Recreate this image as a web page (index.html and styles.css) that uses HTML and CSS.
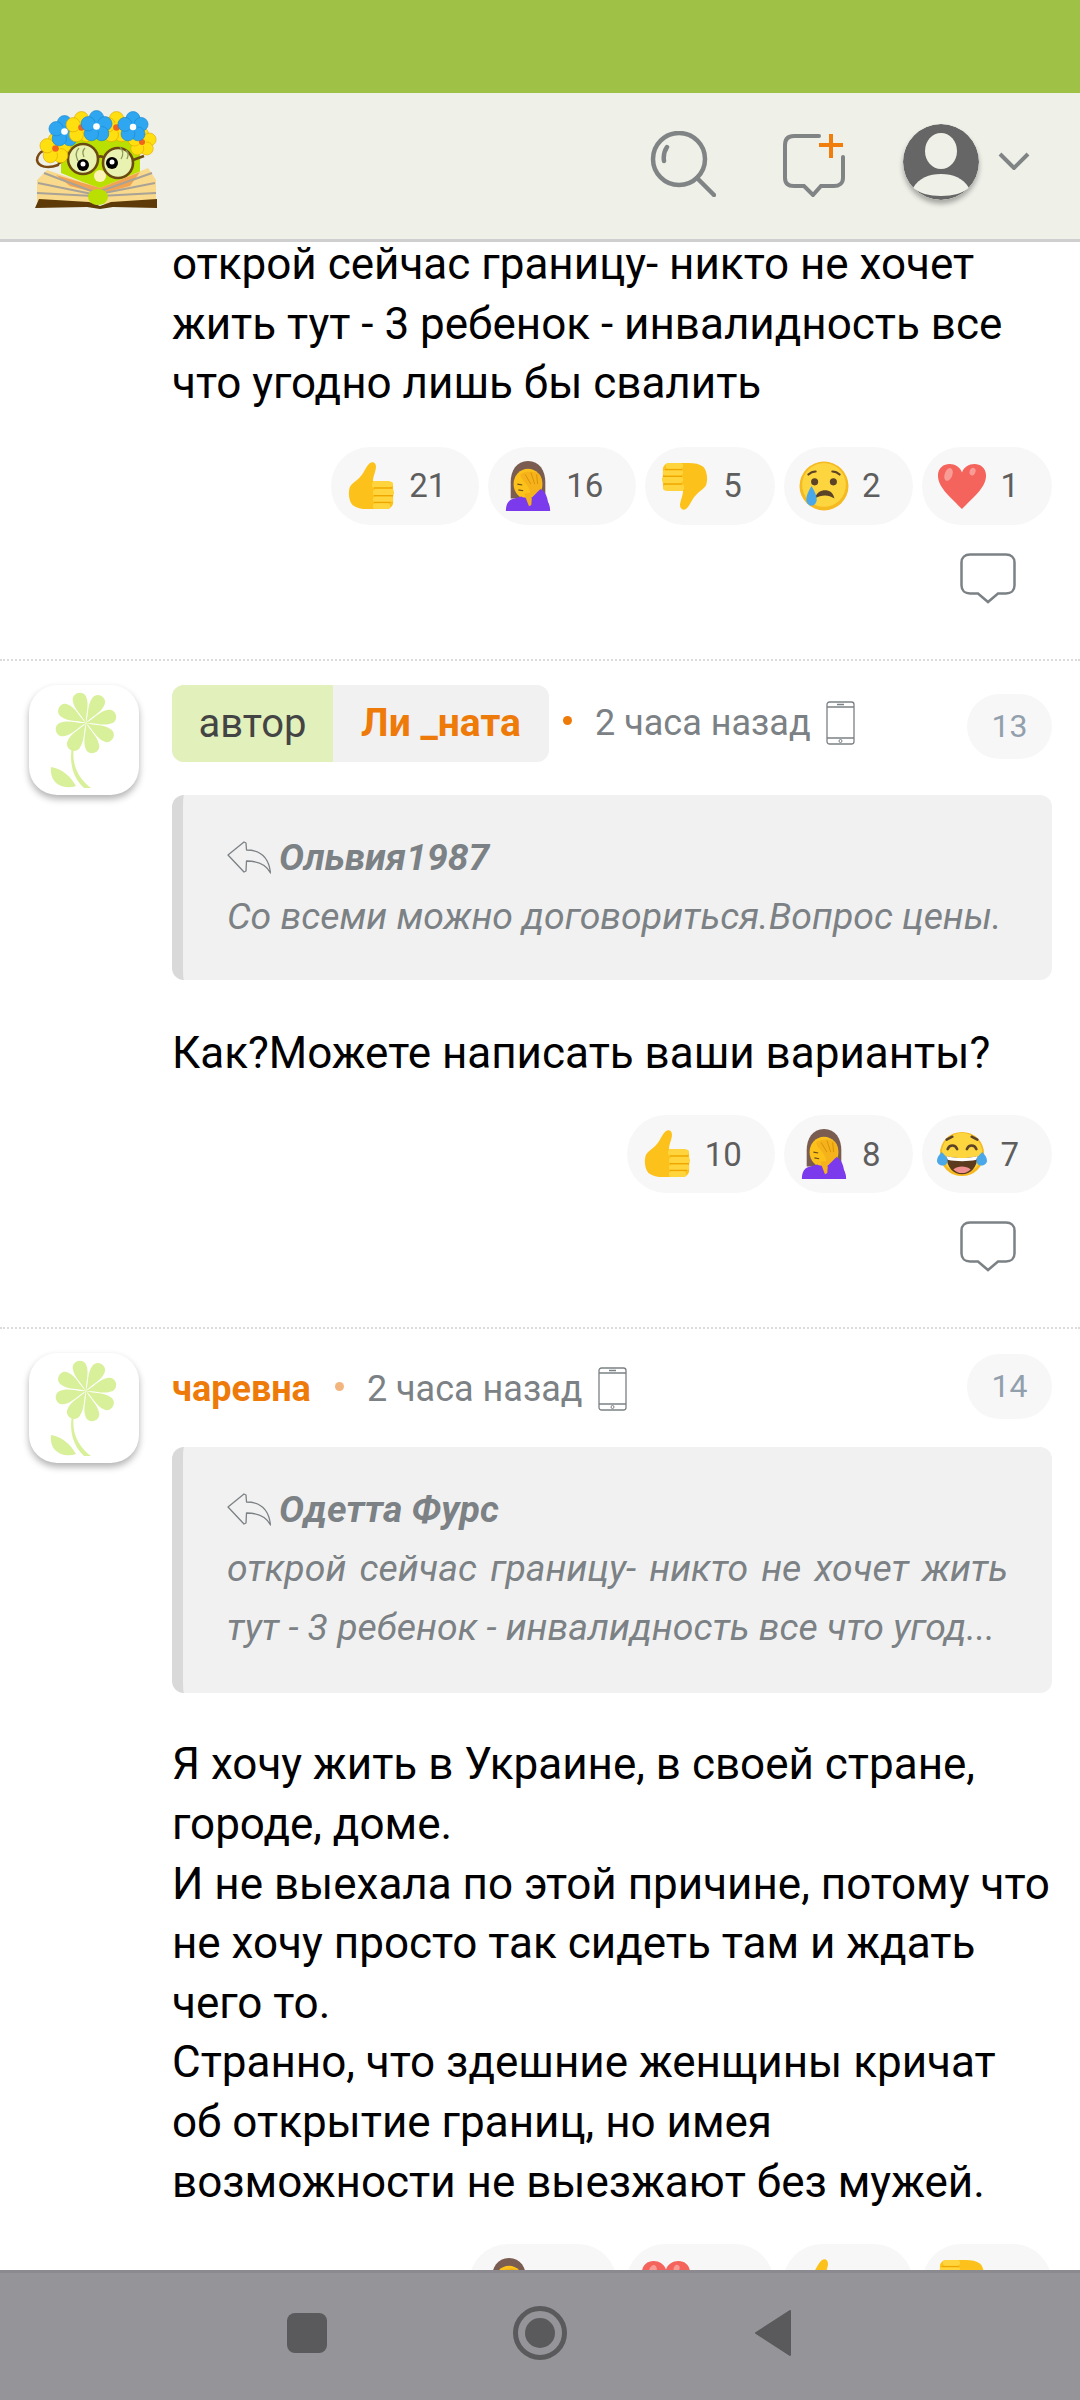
FILE: index.html
```html
<!DOCTYPE html>
<html lang="ru">
<head>
<meta charset="utf-8">
<title>Комментарии</title>
<link rel="stylesheet" href="styles.css">
</head>
<body>
<svg class="defs" width="0" height="0" aria-hidden="true">
  <defs>
    <symbol id="thumb" viewBox="0 0 48 52">
      <path fill="#fcc21b" d="M23 2c4-2 7 1 6 6-1 5-3 9-3 13h15c3 0 6 2 6 6v16c0 4-3 7-7 7H20c-6 0-11-1-15-4-4-4-5-13-3-19 2-4 8-7 11-11 4-4 6-11 10-14z"/>
      <path fill="#ffd43d" d="M27 21h15c3 0 5 1 5 3s-2 4-5 4H28c-2 0-3-1-3-3s1-4 2-4zM29 29h16c2 0 3 2 3 4s-1 3-3 3H29c-2 0-3-1-3-3s1-4 3-4zM29 37h15c2 0 3 1 3 3s-1 3-3 3H29c-2 0-3-1-3-3s1-3 3-3zM29 44h12c2 0 3 1 3 3s-1 3-3 3H29c-2 0-3-1-3-3s1-3 3-3z"/>
      <path fill="none" stroke="#eda600" stroke-width="1.2" d="M27 28h19M27 36h20M27 43h18"/>
    </symbol>
    <symbol id="facepalm" viewBox="0 0 46 52">
      <path fill="#7a5c50" d="M23 0C11 0 5 10 5 22v17h36V22C41 10 35 0 23 0z"/>
      <ellipse cx="23" cy="24" rx="15" ry="16" fill="#fcc21b"/>
      <path fill="#7c3aed" d="M0 52c0-8 3-12 9-13l7-2c4 2 10 2 14 0l7 2c6 1 9 5 9 13z"/>
      <path fill="none" stroke="#6b4a1e" stroke-width="1.2" d="M12 24l5 1M13 30l5 1"/>
      <path fill="#f5b21a" d="M15 14c6-4 15-4 20 0 3 4 3 11 1 16l-9 7c-2-5-3-9-5-12-3-4-7-7-7-11z"/>
      <path fill="none" stroke="#d9920a" stroke-width="1" d="M20 14l6 10M26 12l4 12M32 14l1 10"/>
      <path fill="#f5b21a" d="M19 34l5 13 4-2-2-12z"/>
      <path fill="#7c3aed" d="M26 52l1-14 9-9c4 2 6 6 7 10l3 13z"/>
    </symbol>
    <symbol id="cry" viewBox="0 0 48 48">
      <circle cx="24" cy="24" r="23.500" fill="#f5b921"/>
      <circle cx="24" cy="23" r="21" fill="#fdd53f"/>
      <circle cx="15" cy="20" r="3.400" fill="#5c4328"/><circle cx="33" cy="20" r="3.400" fill="#5c4328"/>
      <path fill="none" stroke="#5c4328" stroke-width="2" stroke-linecap="round" d="M9 13c2-2 5-3 7-3M39 13c-2-2-5-3-7-3"/>
      <path fill="#5c4328" d="M15 36c2-6 6-8 10-8s8 2 9 8c-3-2-6-3-9-3s-7 1-10 3z"/>
      <path fill="#4aa8e8" d="M12 24c3 5 5 9 5 13 0 3-2 6-5 6s-5-3-5-6c0-4 2-8 5-13z"/>
    </symbol>
    <symbol id="heart" viewBox="0 0 52 48">
      <path fill="#f4645c" d="M26 48C15 36 1 26 1 13 1 5 7 1 13 1c6 0 11 3 13 9 2-6 7-9 13-9 6 0 12 4 12 12 0 13-14 23-25 35z"/>
      <ellipse cx="12" cy="12" rx="4" ry="7" fill="#fa9c96" transform="rotate(20 12 12)"/>
      <ellipse cx="37" cy="9" rx="3" ry="4" fill="#fa9c96" transform="rotate(20 37 9)"/>
    </symbol>
    <symbol id="joy" viewBox="0 0 52 48">
      <circle cx="26" cy="24" r="23" fill="#f5b921"/>
      <circle cx="26" cy="23" r="21" fill="#fdd53f"/>
      <path fill="none" stroke="#5c4328" stroke-width="2.600" stroke-linecap="round" d="M11 19c2-5 8-5 10 0M31 19c2-5 8-5 10 0M10 9l6-3M42 9l-6-3"/>
      <path fill="#5c3a1e" d="M10 26c10 3 22 3 32 0 0 12-7 19-16 19S10 38 10 26z"/>
      <path fill="#fff" d="M10 26c10 3 22 3 32 0l-1 4c-9 2-21 2-30 0z"/>
      <path fill="#ef8f8f" d="M17 40c5-4 13-4 18 0-5 5-13 5-18 0z"/>
      <path fill="#4aa8e8" d="M5 22c3 3 6 6 6 9 0 3-2 5-5 5s-6-2-6-5c0-3 2-6 5-9zM47 22c-3 3-6 6-6 9 0 3 2 5 5 5s6-2 6-5c0-3-2-6-5-9z"/>
    </symbol>
    <symbol id="bubble" viewBox="0 0 56 51">
      <path fill="none" stroke="#7b8184" stroke-width="2.500" d="M10 1.500h36c5 0 8.500 3 8.500 8v23c0 5-3.500 8-8.500 8h-8L28 49l-10-8.500h-8c-5 0-8.500-3-8.500-8v-23c0-5 3.500-8 8.500-8z"/>
    </symbol>
    <symbol id="reply" viewBox="0 0 44 33">
      <path fill="none" stroke="#7b8184" stroke-width="1.300" stroke-linejoin="round" d="M1 14L17 1l2 1 .5 7c10 0 22 4 24 23C39 23 30 20 19.500 20l-.5 10-2 1z"/>
    </symbol>
    <symbol id="phone" viewBox="0 0 29 44">
      <rect x="1" y="1" width="27" height="42" rx="2.500" fill="none" stroke="#7b8184" stroke-width="1.300"/>
      <path stroke="#7b8184" stroke-width="1.300" d="M1 6h27M1 37h27M11 3.500h7"/>
      <circle cx="14.500" cy="40" r="1.500" fill="none" stroke="#7b8184"/>
    </symbol>
    <path id="petal" d="M57 38C55 29 49 22 50 13c1-8 13-8 14 0 1 9-5 16-7 25z"/>
    <symbol id="flower" viewBox="0 0 110 110">
      <g fill="#d9f09a">
        <use href="#petal" transform="rotate(-15 57 38)"/>
        <use href="#petal" transform="rotate(30 57 38)"/>
        <use href="#petal" transform="rotate(75 57 38)"/>
        <use href="#petal" transform="rotate(120 57 38)"/>
        <use href="#petal" transform="rotate(165 57 38)"/>
        <use href="#petal" transform="rotate(210 57 38)"/>
        <use href="#petal" transform="rotate(255 57 38)"/>
        <use href="#petal" transform="rotate(300 57 38)"/>
        <path d="M45 62c-3 18 5 32 17 41h-7C44 93 40 78 43 62zM22 82c12 2 20 10 25 19-11 4-27-1-25-19z"/>
      </g>
    </symbol>
    <symbol id="bloom-blue" viewBox="-15 -15 30 30">
      <g fill="#2ea7f0" stroke="#1c86d0" stroke-width=".6">
        <circle cy="-8" r="6.500"/><circle cx="7.600" cy="-2.500" r="6.500"/><circle cx="4.700" cy="6.500" r="6.500"/><circle cx="-4.700" cy="6.500" r="6.500"/><circle cx="-7.600" cy="-2.500" r="6.500"/>
      </g>
      <circle r="4" fill="#2ea7f0"/><circle r="3" fill="#fff"/>
    </symbol>
    <symbol id="bloom-yellow" viewBox="-15 -15 30 30">
      <g fill="#ffdf10" stroke="#e0a800" stroke-width=".6">
        <circle cy="-8" r="6.500"/><circle cx="7.600" cy="-2.500" r="6.500"/><circle cx="4.700" cy="6.500" r="6.500"/><circle cx="-4.700" cy="6.500" r="6.500"/><circle cx="-7.600" cy="-2.500" r="6.500"/>
      </g>
      <circle r="4" fill="#ffdf10"/><circle r="3" fill="#f0641e"/>
    </symbol>
  </defs>
</svg>

<div class="app">
  <div class="status"></div>
  <header class="topbar">
    <svg class="logo" viewBox="0 0 124 96" aria-label="логотип">
      <path fill="none" stroke="#7a4a12" stroke-width="2.500" stroke-linecap="round" d="M24 52C14 56 4 54 3 47c0-4 3-8 6-9"/>
      <path fill="#b9e000" d="M27 22h79v48L66 76 27 60z"/>
      <path fill="#f9d98c" d="M13 57l53 18 48-20 8 12v24H3V67z"/>
      <path fill="#f2a352" d="M22 62l44 13 40-16-10 14-30 8-30-8z"/>
      <path stroke="#a9a296" stroke-width="2" fill="none" d="M10 60l50 19M4 70l54 11M3 80l56 3M118 60l-54 19M121 70l-56 11M122 80l-56 3"/>
      <path fill="#5d3a08" d="M1 95l4-9 50 3 11 4 11-4 46-3 0 9-44-1-13 2-13-2z"/>
      <ellipse cx="64" cy="84" rx="10" ry="8" fill="#b9e000"/>
      <ellipse cx="66" cy="63" rx="6" ry="6" fill="#fff2b8"/>
      <g fill="#e9f2b0" stroke="#6b4a12" stroke-width="2.600">
        <circle cx="49" cy="46" r="15"/><circle cx="84" cy="50" r="15"/>
      </g>
      <path fill="none" stroke="#6b4a12" stroke-width="2.600" d="M64 44c2-1 4-1 6 1M99 47l11-4M34 44l-10 7"/>
      <path fill="none" stroke="#8a9a5a" stroke-width="1.300" d="M44 48c-3-6-2-10 1-13M50 44c-2-4-1-7 1-9M87 46c3-5 2-9-1-12M93 46c2-4 1-7-1-9"/>
      <circle cx="49" cy="52" r="6" fill="#000"/><circle cx="78" cy="50" r="6" fill="#000"/>
      <circle cx="49" cy="51" r="2.500" fill="#fff"/><circle cx="78" cy="49" r="2.500" fill="#fff"/>
      <use href="#bloom-yellow" x="5" y="19" width="33" height="33"/>
      <use href="#bloom-yellow" x="93" y="14" width="30" height="30"/>
      <use href="#bloom-blue" x="14" y="2" width="33" height="33"/>
      <use href="#bloom-yellow" x="31" y="-2" width="33" height="33"/>
      <use href="#bloom-yellow" x="66" y="-2" width="33" height="33"/>
      <use href="#bloom-blue" x="46" y="-3" width="33" height="33"/>
      <use href="#bloom-blue" x="83" y="-2" width="32" height="32"/>
    </svg>
    <div class="actions">
      <svg class="ico-search" viewBox="0 0 66 66" aria-label="поиск">
        <circle cx="29" cy="28" r="26" fill="none" stroke="#808485" stroke-width="4.500"/>
        <path fill="none" stroke="#808485" stroke-width="4.500" stroke-linecap="round" d="M47 47l17 17M14 30c-1-6 1-11 3-14"/>
      </svg>
      <svg class="ico-new" viewBox="0 0 62 64" aria-label="новый комментарий">
        <path fill="none" stroke="#808485" stroke-width="4" stroke-linecap="round" d="M36 3H11C5 3 2 6 2 12v33c0 5 3 8 9 8h10l9 9 8-9h13c5 0 9-3 9-8V24"/>
        <path fill="none" stroke="#f07d0c" stroke-width="4" d="M48 1v24M36 12h24"/>
      </svg>
      <div class="account">
        <svg class="ico-user" viewBox="0 0 76 76" aria-label="профиль">
          <circle cx="38" cy="38" r="38" fill="#666"/>
          <ellipse cx="38" cy="27" rx="16" ry="18" fill="#eff0e8"/>
          <path fill="#eff0e8" d="M10 64c6-10 16-14 28-14s22 4 28 14c-6 5-16 8-28 8s-22-3-28-8z"/>
        </svg>
        <svg class="ico-chev" viewBox="0 0 32 18"><path fill="none" stroke="#808485" stroke-width="4" d="M2 2l14 14L30 2"/></svg>
      </div>
    </div>
  </header>

  <main class="feed">
    <article class="comment comment-cut">
      <div></div>
      <div class="body">
        <p class="text">открой сейчас границу- никто не хочет<br>жить тут - 3 ребенок - инвалидность все<br>что угодно лишь бы свалить</p>
        <div class="reactions">
          <span class="pill"><svg class="emo"><use href="#thumb"/></svg><span class="cnt">21</span></span>
          <span class="pill"><svg class="emo"><use href="#facepalm"/></svg><span class="cnt">16</span></span>
          <span class="pill"><svg class="emo down"><use href="#thumb"/></svg><span class="cnt">5</span></span>
          <span class="pill"><svg class="emo"><use href="#cry"/></svg><span class="cnt">2</span></span>
          <span class="pill"><svg class="emo"><use href="#heart"/></svg><span class="cnt">1</span></span>
        </div>
        <svg class="bubble"><use href="#bubble"/></svg>
      </div>
    </article>

    <article class="comment">
      <div class="avatar"><svg class="flower"><use href="#flower"/></svg></div>
      <div class="body">
        <div class="meta">
          <span class="author-tag"><span class="tag">автор</span><span class="tag-name">Ли _ната</span></span>
          <span class="dot"></span>
          <span class="time">2 часа назад</span>
          <svg class="phone"><use href="#phone"/></svg>
          <span class="num num-low">13</span>
        </div>
        <blockquote class="quote">
          <div class="q-author"><svg class="reply"><use href="#reply"/></svg>Ольвия1987</div>
          <div class="q-text">Со всеми можно договориться.Вопрос цены.</div>
        </blockquote>
        <p class="text after-quote">Как?Можете написать ваши варианты?</p>
        <div class="reactions">
          <span class="pill"><svg class="emo"><use href="#thumb"/></svg><span class="cnt">10</span></span>
          <span class="pill"><svg class="emo"><use href="#facepalm"/></svg><span class="cnt">8</span></span>
          <span class="pill"><svg class="emo"><use href="#joy"/></svg><span class="cnt">7</span></span>
        </div>
        <svg class="bubble"><use href="#bubble"/></svg>
      </div>
    </article>

    <article class="comment">
      <div class="avatar"><svg class="flower"><use href="#flower"/></svg></div>
      <div class="body">
        <div class="meta meta-plain">
          <span class="name">чаревна</span>
          <span class="dot dot-light"></span>
          <span class="time">2 часа назад</span>
          <svg class="phone"><use href="#phone"/></svg>
          <span class="num num-high">14</span>
        </div>
        <blockquote class="quote quote-long">
          <div class="q-author"><svg class="reply"><use href="#reply"/></svg>Одетта Фурс</div>
          <div class="q-text q-wrap">открой сейчас границу- никто не хочет жить тут - 3 ребенок - инвалидность все что угод...</div>
        </blockquote>
        <p class="text after-quote after-long">Я хочу жить в Украине, в своей стране,<br>городе, доме.<br>И не выехала по этой причине, потому что<br>не хочу просто так сидеть там и ждать<br>чего то.<br>Странно, что здешние женщины кричат<br>об открытие границ, но имея<br>возможности не выезжают без мужей.</p>
        <div class="reactions">
          <span class="pill pill-fixed"><svg class="emo"><use href="#facepalm"/></svg></span>
          <span class="pill pill-fixed"><svg class="emo"><use href="#heart"/></svg></span>
          <span class="pill pill-fixed pill-short"><svg class="emo"><use href="#thumb"/></svg></span>
          <span class="pill pill-fixed pill-short"><svg class="emo down"><use href="#thumb"/></svg></span>
        </div>
      </div>
    </article>
  </main>

  <nav class="navbar">
    <span class="nav-square"></span>
    <svg class="nav-home" viewBox="0 0 54 54"><circle cx="27" cy="27" r="24.500" fill="none" stroke="#5a5a5c" stroke-width="5"/><circle cx="27" cy="27" r="15" fill="#5a5a5c"/></svg>
    <svg class="nav-back" viewBox="0 0 36 46"><path fill="#5a5a5c" stroke="#5a5a5c" stroke-width="2" stroke-linejoin="round" d="M35 1v44L1 23z"/></svg>
  </nav>
</div>
</body>
</html>
```
FILE: styles.css
```css
* { box-sizing: border-box; }
html, body { margin: 0; padding: 0; }
body { width: 1080px; height: 2400px; overflow: hidden; background: #fff; font-family: Roboto, "Noto Sans", sans-serif; color: #000; }
.defs { position: absolute; }
.app { position: relative; width: 1080px; height: 2400px; display: flex; flex-direction: column; overflow: hidden; }
.status { height: 93px; flex: none; background: #9fc146; }
.topbar { height: 149px; flex: none; background: #eff0e8; border-bottom: 3px solid #cfcfcf; display: flex; justify-content: space-between; padding: 20px 50px 0 34px; position: relative; z-index: 2; }
.logo { width: 124px; height: 96px; overflow: visible; }
.actions { display: flex; align-items: flex-start; padding-top: 11px; }
.ico-search { width: 66px; height: 66px; margin-top: 7px; }
.ico-new { width: 62px; height: 64px; margin: 9px 0 0 67px; }
.account { display: flex; align-items: center; margin-left: 58px; }
.ico-user { width: 76px; height: 76px; border-radius: 50%; box-shadow: 0 4px 5px rgba(0,0,0,.3); }
.ico-chev { width: 32px; height: 18px; margin-left: 19px; margin-top: -2px; }

.feed { flex: 1; min-height: 0; margin-top: -7px; }
.comment { display: grid; grid-template-columns: 172px 1fr; padding: 24px 28px 55px 0; border-bottom: 2px dotted #dcdcdc; }
.comment-cut { padding-bottom: 55px; padding-top: 0; }
.avatar { width: 110px; height: 110px; margin-left: 29px; background: #fff; border-radius: 28px; box-shadow: 0 4px 7px rgba(0,0,0,.3); }
.flower { width: 110px; height: 110px; display: block; }
.body { min-width: 0; display: flex; flex-direction: column; }

.text { margin: 0; font-size: 44px; line-height: 59.6px; color: #000; }
.comment-cut .reactions { margin-top: 33px; }
.after-quote { margin-top: 44px; }
.after-long { margin-top: 42px; }

.reactions { display: flex; justify-content: flex-end; gap: 9px; margin-top: 32px; }
.pill { height: 78px; display: inline-flex; align-items: center; padding: 0 33px 0 15px; border-radius: 39px; background: #f7f7f7; }
.pill-fixed { width: 148px; padding-right: 0; }
.pill-short { width: 130px; }
.emo { width: 50px; height: 50px; flex: none; }
.down { transform: scale(-1, -1); }
.cnt { margin-left: 13px; font-size: 33px; color: #5e5e5e; }
.bubble { width: 56px; height: 51px; align-self: flex-end; margin: 28px 36px 0 0; }

.meta { display: flex; align-items: center; height: 77px; }
.meta-plain { height: 72px; }
.author-tag { display: flex; height: 77px; width: 377px; border-radius: 12px; overflow: hidden; background: #f1f1f1; line-height: 77px; }
.tag { width: 161px; text-align: center; background: #e2f0bb; color: #444; font-size: 40px; }
.tag-name { flex: 1; text-align: center; font-weight: 700; color: #ee7a0a; font-size: 39px; }
.name { font-size: 36px; font-weight: 700; color: #ee7a0a; }
.dot { width: 9px; height: 9px; margin-left: 14px; border-radius: 50%; background: #ee7a0a; margin-bottom: 6px; }
.dot-light { background: #f3b57e; margin-left: 24px; }
.time { margin-left: 23px; font-size: 36px; color: #7b8184; }
.phone { width: 29px; height: 44px; margin-left: 15px; }
.num { margin-left: auto; min-width: 85px; height: 65px; line-height: 65px; border-radius: 33px; text-align: center; background: #f7f7f7; color: #92a0ad; font-size: 32px; }
.num-low { margin-top: 6px; }
.num-high { margin-top: -6px; }

.quote { margin: 33px 0 0; padding: 33px 44px 34px 44px; background: #f1f1f1; border-left: 11px solid #d9d9d9; border-radius: 12px; color: #7b8184; font-style: italic; font-size: 37.400px; line-height: 59px; }
.meta-plain + .quote { margin-top: 22px; }
.quote-long { padding-bottom: 36px; }
.q-author { display: flex; align-items: center; font-weight: 700; }
.reply { width: 44px; height: 33px; margin-right: 8px; }
.q-text { white-space: nowrap; }
.q-wrap { white-space: normal; text-align: justify; }

.navbar { position: absolute; left: 0; right: 0; bottom: 0; height: 130px; z-index: 3; background: #959499; border-top: 3px solid #8b8a90; display: flex; align-items: center; justify-content: center; padding-bottom: 8px; }
.nav-square { width: 40px; height: 40px; border-radius: 8px; background: #5a5a5c; margin-left: -2px; }
.nav-home { width: 54px; height: 54px; margin-left: 186px; }
.nav-back { width: 36px; height: 46px; margin-left: 188px; }
```
